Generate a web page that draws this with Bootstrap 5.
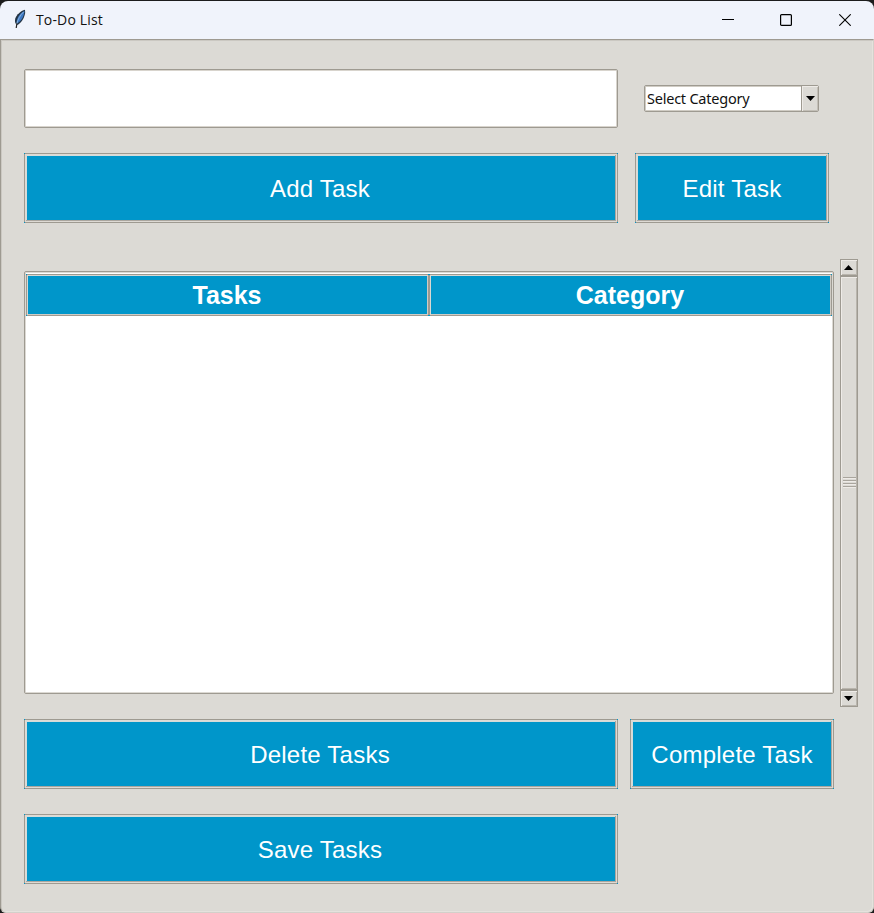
<!DOCTYPE html>
<html lang="en">
<head>
<meta charset="utf-8">
<meta name="viewport" content="width=device-width, initial-scale=1">
<title>To-Do List</title>
<link href="https://cdn.jsdelivr.net/npm/bootstrap@5.3.0/dist/css/bootstrap.min.css" rel="stylesheet">
<style>
:root { --face: #dcdad5; --edge: #9e9a91; --lite: #eeebe7; --blue: #0096ca; }
body { background: #1c1c1c; font-family: "Open Sans", "Noto Sans", sans-serif; }
.app-window { height: 913px; padding-top: 1px; }
.title-bar { height: 38px; background: #f0f3fb; border-radius: 8px 8px 0 0; color: #111; }
.title-text { font-size: 14px; line-height: 20px; letter-spacing: .15px; margin-left: 9px; }
.feather { margin-left: 13px; margin-top: -2px; }
.win-btn { width: 58.5px; height: 38px; }
.client { background: var(--face); border: 1px solid var(--edge); border-right-color: #d3d0ca; border-bottom-color: #d3d0ca;
  box-shadow: inset 1px 1px #cbc8c2, inset -1px -1px #e5e2dd; border-radius: 0 0 6px 6px; padding: 29px 0 0 23px; }
.task-entry { width: 594px; height: 59px; border: 1px solid var(--edge); border-radius: 2px; box-shadow: inset 0 0 0 1px #d8d4cd; padding: 4px 10px; outline: 0; }
.combo { width: 175px; height: 27px; margin-left: 26px; border: 1px solid var(--edge); border-radius: 2px; background: #fff; box-shadow: inset 0 0 0 1px #d0ccc4; }
.combo-text { font: 14.5px "Noto Sans", sans-serif; letter-spacing: -.23px; color: #111; padding-left: 2px; line-height: 25px; }
.combo-arrow { width: 17px; background: var(--face); border-left: 1px solid var(--edge); box-shadow: inset 1px 1px var(--lite), inset -1px -1px #c3bfb7; }
/* Edge lines stop one pixel short, so the button colour shows in each corner */
.tk-btn, .tree-head { border: 1px solid transparent; border-radius: 0; color: #fff;
  background:
    linear-gradient(var(--edge), var(--edge)) top / calc(100% - 2px) 1px no-repeat border-box,
    linear-gradient(var(--edge), var(--edge)) bottom / calc(100% - 2px) 1px no-repeat border-box,
    linear-gradient(var(--edge), var(--edge)) left / 1px calc(100% - 2px) no-repeat border-box,
    linear-gradient(var(--edge), var(--edge)) right / 1px calc(100% - 2px) no-repeat border-box,
    var(--blue); }
.tk-btn { height: 70px; padding: 1px 2px 0 0;
  box-shadow: inset 0 0 0 1px #dedad4, inset -2px -2px #aaa69f, inset 2px 2px #d5dcda;
  font: 24px "Liberation Sans", Arial, sans-serif; letter-spacing: .23px; }
.w-wide { width: 594px; }
.w-edit { width: 194px; margin-left: 17px; }
.w-done { width: 204px; margin-left: 12px; }
.w-edit, .w-done { padding-right: 0; }
.row-add { margin-top: 25px; }
.row-list { margin-top: 36px; height: 448px; }
.row-del { margin-top: 12px; }
.row-save { margin-top: 25px; }
.tree { width: 810px; height: 423px; margin-top: 12px; border: 1px solid var(--edge); border-radius: 2px; background: #fff; box-shadow: inset 0 0 0 1px #dcd9d3; padding: 2px 1px 0; }
.tree-head { height: 42px; padding-right: 1px; box-shadow: inset 1px 1px #d8d8d3, inset -1px -1px #d0ccc5;
  font: bold 25px "Liberation Sans", Arial, sans-serif; }
.scroll-track { width: 18px; margin-left: 6px; background: var(--face); }
.scroll-part { border: 1px solid var(--edge); box-shadow: inset 1px 1px #eeebe7, inset -1px -1px #b9b5ad; }
.scroll-end { height: 17px; padding-right: 1px; }
.grip { width: 13px; height: 11px; margin-top: -2px; background: repeating-linear-gradient(#a9a59d 0 1px, #eeebe7 1px 2px, #dcdad5 2px 3px); }
</style>
</head>
<body>
<div class="app-window d-flex flex-column overflow-hidden">
  <header class="title-bar d-flex align-items-center flex-shrink-0">
    <svg class="feather" width="14" height="20" viewBox="0 0 14 20">
      <path d="M12 .7C7.700 2 3.500 5.500 2.300 9.500c-.5 2-.4 3.600.3 5l1.500 1.500C8.500 14 11 9.500 12.200 4z" fill="#233343"/>
      <path d="M11.500 1.800C7.500 4 4.300 7.500 3.500 13.500l1 .7C8.500 12 11 7.500 11.500 1.800z" fill="#3c79c5"/>
      <path d="M10.500 3C7 6.500 4.800 10.500 3.700 15" fill="none" stroke="#a9c6e4" stroke-width=".7"/>
      <path d="M3.900 14.500 3.200 19" stroke="#222" stroke-width="1.200"/>
    </svg>
    <span class="title-text">To-Do List</span>
    <div class="d-flex ms-auto">
      <div class="win-btn d-flex align-items-center justify-content-center"><svg width="12" height="12"><path d="M0 5.500h12" stroke="#000"/></svg></div>
      <div class="win-btn d-flex align-items-center justify-content-center"><svg width="12" height="12"><rect x=".6" y=".6" width="10.800" height="10.800" rx="1" fill="none" stroke="#000" stroke-width="1.200"/></svg></div>
      <div class="win-btn d-flex align-items-center justify-content-center"><svg width="12" height="12"><path d="M.3.300l11.400 11.400M11.700.300.300 11.700" stroke="#000" stroke-width="1.100"/></svg></div>
    </div>
  </header>
  <main class="client flex-grow-1">
    <div class="d-flex align-items-center">
      <input class="task-entry bg-white" type="text" aria-label="Task">
      <div class="combo d-flex">
        <span class="combo-text flex-grow-1">Select Category</span>
        <span class="combo-arrow d-flex align-items-center justify-content-center"><svg width="9" height="5"><path d="M0 0h9L4.500 5z"/></svg></span>
      </div>
    </div>
    <div class="row-add d-flex">
      <button class="tk-btn w-wide" type="button">Add Task</button>
      <button class="tk-btn w-edit" type="button">Edit Task</button>
    </div>
    <div class="row-list d-flex">
      <div class="tree">
        <div class="d-flex">
          <div class="tree-head w-50 d-flex align-items-center justify-content-center">Tasks</div>
          <div class="tree-head w-50 d-flex align-items-center justify-content-center">Category</div>
        </div>
      </div>
      <div class="scroll-track d-flex flex-column">
        <div class="scroll-part scroll-end d-flex align-items-center justify-content-center"><svg width="9" height="5"><path d="M0 5h9L4.500 0z"/></svg></div>
        <div class="scroll-part flex-grow-1 d-flex align-items-center justify-content-center"><div class="grip"></div></div>
        <div class="scroll-part scroll-end d-flex align-items-center justify-content-center"><svg width="9" height="5"><path d="M0 0h9L4.500 5z"/></svg></div>
      </div>
    </div>
    <div class="row-del d-flex">
      <button class="tk-btn w-wide" type="button">Delete Tasks</button>
      <button class="tk-btn w-done" type="button">Complete Task</button>
    </div>
    <div class="row-save d-flex">
      <button class="tk-btn w-wide" type="button">Save Tasks</button>
    </div>
  </main>
</div>
<script src="https://cdn.jsdelivr.net/npm/bootstrap@5.3.0/dist/js/bootstrap.bundle.min.js"></script>
</body>
</html>
